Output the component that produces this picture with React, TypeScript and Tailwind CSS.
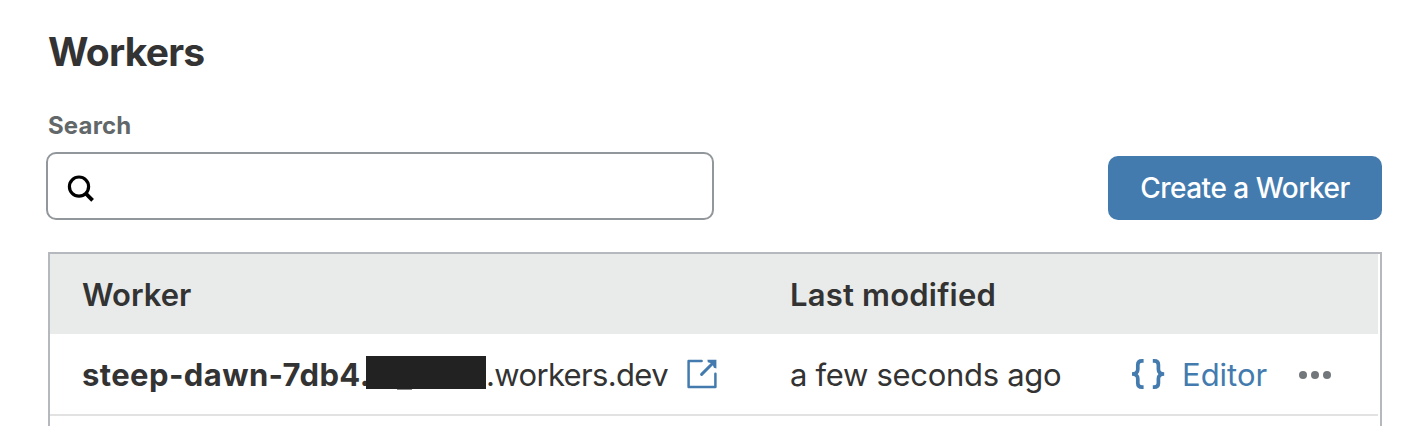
import React from "react";

function SearchIcon() {
  return (
    <svg className="block h-7 w-7" viewBox="0 0 28 28" fill="none" stroke="#000" strokeWidth="3.2">
      <circle cx="12" cy="11.6" r="9.6" />
      <path d="M18.4 18.2L25.6 25.4" strokeWidth="3.8" />
    </svg>
  );
}

function ExternalIcon() {
  return (
    <svg className="block h-[30px] w-[30px]" viewBox="0 0 30 30" fill="none" stroke="#447bae">
      <path d="M14.6 2H1.6V28H28.4V14.8" strokeLinejoin="round" strokeLinecap="round" strokeWidth="2.5" />
      <path d="M14.6 15.4L26 4" strokeWidth="3" strokeLinecap="round" />
      <path d="M20.4 0.8H29.4V9.4L26.9 8.8L26 6.4L23.6 4L20.8 3.3Z" fill="#447bae" stroke="none" />
    </svg>
  );
}

function BracesIcon() {
  return (
    <svg className="block h-[30px] w-[34px]" viewBox="0 0 34 30" fill="none" stroke="#447bae" strokeWidth="3.7">
      <path d="M12.6 1.9H11Q6.8 1.9 6.8 5.8V10.2Q6.8 15 1 15Q6.8 15 6.8 19.8V24.2Q6.8 28.1 11 28.1H12.6" />
      <path d="M21.8 1.9H23.2Q27.4 1.9 27.4 5.8V10.2Q27.4 15 33.2 15Q27.4 15 27.4 19.8V24.2Q27.4 28.1 23.2 28.1H21.8" />
    </svg>
  );
}

export default function App() {
  return (
    <main className="h-[426px] w-[1410px] overflow-hidden bg-white pl-[46px] pr-7 font-['Inter',sans-serif] text-[#333]">
      <h1 className="ml-[2px] pt-7 text-[39px] leading-[48px] font-bold tracking-[-0.75px]">Workers</h1>
      <div className="flex items-end justify-between pt-[34px]">
        <div>
          <label htmlFor="search" className="ml-[2px] block h-[42px] text-[24px] leading-[32px] font-bold tracking-[0.15px] text-[#62676a]">
            Search
          </label>
          <div className="flex h-[68px] w-[668px] items-center rounded-[10px] border-2 border-[#92979b] pl-[19px] pt-[6px]">
            <SearchIcon />
            <input id="search" className="h-full flex-1 outline-none" />
          </div>
        </div>
        <button className="h-16 w-[274px] rounded-[10px] bg-[#447bae] text-[28px] leading-[64px] font-[450] tracking-[-0.5px] whitespace-nowrap text-white">
          Create a Worker
        </button>
      </div>
      <section className="mt-8 ml-[2px] h-[200px] border-2 border-[#b5b9be] pr-[2px] text-[31px] leading-[40px] whitespace-nowrap">
        <div className="flex h-20 items-center bg-[#e9ebea] pl-8 pt-[2px] font-semibold">
          <div className="w-[708px]">Worker</div>
          <div className="tracking-[0.2px]">Last modified</div>
        </div>
        <div className="flex h-[82px] items-center border-b-2 border-[#e2e2e2] pl-8 pt-[2px]">
          <div className="flex w-[708px] items-center">
            <div className="w-[284px] font-bold tracking-[0.4px]">steep-dawn-7db4.</div>
            <div className="relative -mt-[5px] h-[33px] w-[120px] bg-[#222]">
              <span className="absolute left-[31px] top-[33px] h-px w-[15px] bg-[#888]" />
            </div>
            <div className="w-[201px] tracking-[-0.65px]">.workers.dev</div>
            <div className="-mt-[2px]">
              <ExternalIcon />
            </div>
          </div>
          <div className="w-[341px] tracking-[-0.3px]">a few seconds ago</div>
          <div className="-mt-[2px]">
            <BracesIcon />
          </div>
          <div className="ml-[17px] w-[117px] text-[#447bae]">Editor</div>
          <div className="-mt-px flex gap-1">
            <i className="h-2 w-2 rounded-full bg-[#72777b]" />
            <i className="h-2 w-2 rounded-full bg-[#72777b]" />
            <i className="h-2 w-2 rounded-full bg-[#72777b]" />
          </div>
        </div>
      </section>
    </main>
  );
}
